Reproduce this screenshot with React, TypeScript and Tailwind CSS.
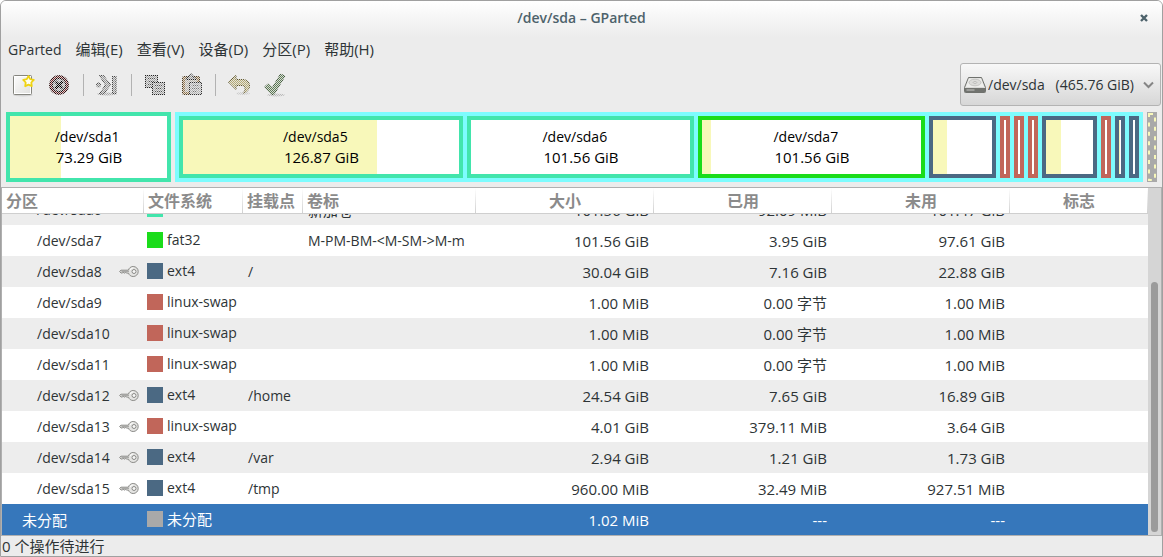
import type { ReactNode } from 'react';

type Row = {
  name: string;
  locked?: boolean;
  color: string;
  fs: string;
  mount?: string;
  label?: string;
  size: string;
  used: string;
  unused: string;
  top?: boolean;
  selected?: boolean;
};

const TEAL = 'bg-[#42e5ac]';
const GREEN = 'bg-[#1bdc1b]';
const BLUE = 'bg-[#4b6983]';
const RED = 'bg-[#c1665a]';
const GRAY = 'bg-[#a9a9a9]';

const rows: Row[] = [
  { name: '/dev/sda6', color: TEAL, fs: 'ntfs', label: '新加卷', size: '101.56 GiB', used: '92.09 MiB', unused: '101.47 GiB' },
  { name: '/dev/sda7', color: GREEN, fs: 'fat32', label: 'M-PM-BM-<M-SM->M-m', size: '101.56 GiB', used: '3.95 GiB', unused: '97.61 GiB' },
  { name: '/dev/sda8', locked: true, color: BLUE, fs: 'ext4', mount: '/', size: '30.04 GiB', used: '7.16 GiB', unused: '22.88 GiB' },
  { name: '/dev/sda9', color: RED, fs: 'linux-swap', size: '1.00 MiB', used: '0.00 字节', unused: '1.00 MiB' },
  { name: '/dev/sda10', color: RED, fs: 'linux-swap', size: '1.00 MiB', used: '0.00 字节', unused: '1.00 MiB' },
  { name: '/dev/sda11', color: RED, fs: 'linux-swap', size: '1.00 MiB', used: '0.00 字节', unused: '1.00 MiB' },
  { name: '/dev/sda12', locked: true, color: BLUE, fs: 'ext4', mount: '/home', size: '24.54 GiB', used: '7.65 GiB', unused: '16.89 GiB' },
  { name: '/dev/sda13', locked: true, color: RED, fs: 'linux-swap', size: '4.01 GiB', used: '379.11 MiB', unused: '3.64 GiB' },
  { name: '/dev/sda14', locked: true, color: BLUE, fs: 'ext4', mount: '/var', size: '2.94 GiB', used: '1.21 GiB', unused: '1.73 GiB' },
  { name: '/dev/sda15', locked: true, color: BLUE, fs: 'ext4', mount: '/tmp', size: '960.00 MiB', used: '32.49 MiB', unused: '927.51 MiB' },
  { name: '未分配', color: GRAY, fs: '未分配', size: '1.02 MiB', used: '---', unused: '---', top: true, selected: true },
];

const headers = ['分区', '文件系统', '挂载点', '卷标', '大小', '已用', '未用', '标志'];

const hasHan = (s: string) => /[\u4e00-\u9fff]/.test(s);

function Txt({ children }: { children: string }) {
  return <span className={hasHan(children) ? 'text-[15px]' : 'text-[14px]'}>{children}</span>;
}

function KeyIcon() {
  return (
    <svg width="20" height="14" viewBox="0 0 20 14" aria-hidden="true">
      <path
        d="M9.4 5.2H2L.6 6.400 2 8h1.200l.9-.8.9.8h1l.8-.7 1 .8h1.700c.6 2 2.400 3.400 4.700 3.400 2.800 0 5-2.200 5-5S17 1.500 14.200 1.500C11.800 1.500 10 3 9.400 5.200z"
        fill="#e4e4e2"
        stroke="#8a8a87"
      />
      <path d="M2.500 6.400h7.500" stroke="#a3a3a0" />
      <circle cx="15" cy="6.500" r="2" fill="#f7f7f7" stroke="#8a8a87" />
      <path d="M11.200 5a3.600 3.600 0 0 1 3-2.200" stroke="#fff" fill="none" />
    </svg>
  );
}

function ToolButton({ label, disabled, children }: { label: string; disabled?: boolean; children: ReactNode }) {
  return (
    <button type="button" aria-label={label} disabled={disabled} className="flex h-9 w-9 items-center justify-center">
      <svg width="24" height="24" viewBox="0 0 24 24" aria-hidden="true">
        {disabled ? <g mask="url(#stipple)">{children}</g> : children}
      </svg>
    </button>
  );
}

function Separator() {
  return (
    <div className="flex w-3 justify-center">
      <div className="h-[22px] w-px bg-[#b2b2b2]" />
    </div>
  );
}

function Toolbar() {
  return (
    <div className="flex items-center pl-1" role="toolbar">
      <svg width="0" height="0" className="absolute" aria-hidden="true">
        <defs>
          <pattern id="checker" width="2" height="2" patternUnits="userSpaceOnUse">
            <rect width="2" height="2" fill="#222" />
            <rect width="1" height="1" fill="#fff" />
            <rect x="1" y="1" width="1" height="1" fill="#fff" />
          </pattern>
          <mask id="stipple" maskUnits="userSpaceOnUse" x="0" y="0" width="24" height="24">
            <rect width="24" height="24" fill="url(#checker)" shapeRendering="crispEdges" />
          </mask>
          <linearGradient id="paper" x2="1" y2="1">
            <stop stopColor="#fdfdfd" />
            <stop offset="1" stopColor="#dfdfdd" />
          </linearGradient>
        </defs>
      </svg>
      <ToolButton label="新建">
        <ellipse cx="12" cy="22" rx="10" ry="1.500" fill="#d2d2d2" />
        <rect x="2.500" y="2.500" width="18" height="19" rx="1" fill="url(#paper)" stroke="#85857f" />
        <rect x="3.500" y="3.500" width="16" height="17" fill="none" stroke="#fff" />
        <path
          d="m17.500 3 1.700 3.200 3.600.6-2.500 2.700.5 3.700-3.300-1.600-3.300 1.600.5-3.700-2.500-2.700 3.600-.6z"
          fill="#fffef0"
          stroke="#efd312"
          strokeWidth="1.800"
          strokeLinejoin="round"
        />
      </ToolButton>
      <ToolButton label="删除" disabled>
        <circle cx="12" cy="12" r="10" fill="#2c0a0a" />
        <circle cx="12" cy="12" r="8.500" fill="#8c2a2e" />
        <circle cx="12" cy="12" r="6.800" fill="#a9a9a9" stroke="#1c1010" strokeWidth="1.400" />
        <path d="m8.500 8.500 7 7m0-7-7 7" stroke="#000" strokeWidth="2.800" />
      </ToolButton>
      <Separator />
      <ToolButton label="调整大小/移动" disabled>
        <ellipse cx="12" cy="21" rx="10" ry="1.500" fill="#aaa" />
        <circle cx="3.500" cy="12" r="2" fill="#999" stroke="#444" />
        <path d="M4.500 2.500h4l7 9.500-7 9h-4l6-9z" fill="#999" stroke="#444" />
        <rect x="17.500" y="3.500" width="3.500" height="17" fill="#999" stroke="#444" />
      </ToolButton>
      <Separator />
      <ToolButton label="复制" disabled>
        <rect x="2.500" y="2.500" width="12" height="12" fill="#a8a8a8" stroke="#222" />
        <path d="M5 5.500h7M5 8.500h7M5 11.500h7" stroke="#555" />
        <rect x="9.500" y="9.500" width="12" height="12" fill="#a8a8a8" stroke="#222" />
        <path d="M12 12.500h7M12 15.500h7M12 18.500h7" stroke="#555" />
      </ToolButton>
      <ToolButton label="粘贴" disabled>
        <rect x="3.500" y="3.500" width="17" height="18" rx="1" fill="#94754b" stroke="#4c3a20" />
        <rect x="6" y="6" width="12" height="13" fill="#b9b4aa" />
        <path d="M7 6.500c0-2 1.500-2.500 3-2.500 0-2 1-3 2-3s2 1 2 3c1.500 0 3 .5 3 2.500z" fill="#999" stroke="#222" />
        <rect x="10.500" y="9.500" width="12" height="12" fill="#b4b4b4" stroke="#333" />
        <path d="M13 12.500h7M13 15.500h7M13 18.500h5" stroke="#777" />
      </ToolButton>
      <Separator />
      <ToolButton label="撤消" disabled>
        <ellipse cx="16" cy="20.500" rx="7" ry="1.500" fill="#ccc" />
        <path
          d="m1.500 9 7.500-6.500v4h6.500c4 0 7 2.500 7 6.500 0 3.500-2.500 6.500-6.500 7 1.500-1.500 2.500-3 2-5-.4-1.700-1.500-2.500-3-2.500H9v4z"
          fill="#b5aa74"
          stroke="#5e5528"
        />
      </ToolButton>
      <ToolButton label="应用" disabled>
        <ellipse cx="13" cy="22" rx="9" ry="1.500" fill="#bbb" />
        <path d="m1.500 14 4-3.500 4 4L17.500 1l4.500 2L11 21.500H8.500z" fill="#5f7c56" stroke="#3a5233" strokeLinejoin="round" />
      </ToolButton>
    </div>
  );
}

function DevicePicker() {
  return (
    <label className="mr-px flex w-[201px] items-center rounded-[3px] border border-[#b3b3b3] bg-linear-to-b from-[#f8f8f8] to-[#d7d7d7] pr-[6px] pl-[3px]">
      <svg width="22" height="18" viewBox="0 0 22 18" className="shrink-0" aria-hidden="true">
        <path d="M4.500 1.500h13l4 10v4.200q0 .8-.8.8H1.300q-.8 0-.8-.8v-4.200z" fill="#d9d9d7" stroke="#6f716d" />
        <path d="M1 12h20v3.500q0 .5-.5.500h-19q-.5 0-.5-.5z" fill="#71736f" />
        <path d="M2.500 14h8" stroke="#c8c8c6" />
        <path d="M5 2.500h12l3.200 8.500H1.800z" fill="#eeeeec" />
        <ellipse cx="11" cy="6.500" rx="6" ry="3.300" fill="#dcdcda" stroke="#c4c4c2" />
        <ellipse cx="11" cy="6.500" rx="1.800" ry=".8" fill="#fff" stroke="#b5b5b3" />
      </svg>
      <select aria-label="设备" className="min-w-0 flex-1 appearance-none bg-transparent pl-[2px] text-[14px] outline-none">
        <option>{'/dev/sda\u00a0\u00a0 (465.76 GiB)'}</option>
      </select>
      <svg width="11" height="8" viewBox="0 0 11 8" className="shrink-0" aria-hidden="true">
        <path d="m1 1.500 4.500 4.500L10 1.500" fill="none" stroke="#858585" strokeWidth="2" />
      </svg>
    </label>
  );
}

function Block({ frame, size, used, name, amount }: { frame: string; size: string; used?: number; name?: string; amount?: string }) {
  return (
    <div className={`grid border-4 ${frame} ${size}`}>
      <div className="col-start-1 row-start-1 flex bg-white">
        <div className="bg-[#f8f8ba]" style={{ width: `${used ?? 0}%` }} />
      </div>
      {name && (
        <div className="z-10 col-start-1 row-start-1 flex items-center justify-center leading-[21px] text-black">
          <div>
            <div className="text-[14px]">{name}</div>
            <div className="pl-px text-[15px]">{amount}</div>
          </div>
        </div>
      )}
    </div>
  );
}

// Grow factors are the inner widths; each block's 4px frame comes on top.
function DiskMap() {
  const teal = 'border-[#42e5ac]';
  const blue = 'border-[#4b6983]';
  const red = 'border-[#c1665a]';
  const thin = 'w-[10px] shrink-0';
  return (
    <div className="mt-[6px] mb-[5px] flex h-[70px] gap-1 px-[5px]">
      <Block frame={teal} size="flex-[157_1_0px]" used={32.5} name="/dev/sda1" amount="73.29 GiB" />
      <div className="flex flex-[960_1_0px] gap-1 bg-[#7dfcfe] p-1">
        <Block frame={teal} size="flex-[276_1_0px]" used={70.3} name="/dev/sda5" amount="126.87 GiB" />
        <Block frame={teal} size="flex-[219_1_0px]" name="/dev/sda6" amount="101.56 GiB" />
        <Block frame="border-[#1bdc1b]" size="flex-[219_1_0px]" used={4.1} name="/dev/sda7" amount="101.56 GiB" />
        <Block frame={blue} size="flex-[59_1_0px]" used={23.7} />
        <Block frame={red} size={thin} />
        <Block frame={red} size={thin} />
        <Block frame={red} size={thin} />
        <Block frame={blue} size="flex-[47_1_0px]" used={31.9} />
        <Block frame={red} size={thin} />
        <Block frame={blue} size={thin} used={50} />
        <Block frame={blue} size={thin} />
      </div>
      <svg width="10" height="70" viewBox="0 0 10 70" className="shrink-0 bg-[#a9a9a9]" aria-hidden="true">
        <path d="M2 2H8V68H2Z" fill="none" stroke="#f8f8ba" strokeWidth="2" strokeDasharray="4 5.4" />
      </svg>
    </div>
  );
}

function PartitionTable() {
  return (
    <table className="min-w-0 flex-1 table-fixed border-collapse whitespace-nowrap">
      <colgroup>
        <col className="w-[142px]" />
        <col className="w-[99px]" />
        <col className="w-[60px]" />
        <col className="w-[173px]" />
        <col className="w-[178px]" />
        <col className="w-[178px]" />
        <col className="w-[178px]" />
        <col />
      </colgroup>
      <thead>
        <tr className="h-[26px] bg-white">
          {headers.map((h, i) => (
            <th
              key={h}
              className={`bg-[linear-gradient(to_bottom,#ffffff,#cfcfcf)] bg-[length:1px_100%] bg-right bg-no-repeat p-0 px-1 text-[16px] leading-[25px] font-bold text-[#8b8b8b] shadow-[inset_0_-1px_0_#cfcfcf] ${i < 4 ? 'text-left' : 'text-center'}`}
            >
              {h}
            </th>
          ))}
        </tr>
      </thead>
      <tbody>
        {rows.map((r, i) => {
          // The first row is scrolled partly under the header.
          const box = i === 0 ? 'h-[11px]' : 'h-[31px]';
          const cell = (content: ReactNode, align: string) => (
            <td className="p-0">
              <div className={`flex flex-col justify-end overflow-hidden ${box}`}>
                <div className={`flex h-[31px] shrink-0 items-center leading-[30px] ${align}`}>{content}</div>
              </div>
            </td>
          );
          const number = 'justify-end pr-[5px] text-[15px]';
          const tone = r.selected ? 'bg-[#3677bb] text-white' : i % 2 === 0 ? 'bg-[#ededed]' : 'bg-white';
          return (
            <tr key={r.name} className={tone} aria-selected={!!r.selected}>
              {cell(
                <>
                  <Txt>{r.name}</Txt>
                  {r.locked && <KeyIcon />}
                </>,
                `justify-between pr-[5px] ${r.top ? 'pl-5' : 'pl-[35px]'}`,
              )}
              {cell(
                <>
                  <span className={`h-4 w-4 shrink-0 ${r.color}`} />
                  <Txt>{r.fs}</Txt>
                </>,
                'gap-1 pb-px pl-[3px]',
              )}
              {cell(<Txt>{r.mount ?? ''}</Txt>, 'pl-[5px]')}
              {cell(<Txt>{r.label ?? ''}</Txt>, 'pl-[5px]')}
              {cell(r.size, number)}
              {cell(r.used, number)}
              {cell(r.unused, number)}
              {cell(null, '')}
            </tr>
          );
        })}
      </tbody>
    </table>
  );
}

export default function App() {
  return (
    <div className="flex min-h-screen flex-col overflow-hidden rounded-t-[6px] border border-[#a0a0a0] bg-[#ececec] font-['Open_Sans','Noto_Sans_CJK_SC',sans-serif] text-[#2e3436]">
      <header className="grid h-9 grid-cols-[1fr_auto_1fr] items-center bg-linear-to-b from-white to-[#ececec] pb-[2px]">
        <h1 className="col-start-2 text-[14px] leading-5 font-semibold text-[#4d626b]">/dev/sda – GParted</h1>
        <button type="button" aria-label="关闭" className="mr-3 flex h-3 w-3 items-center justify-center justify-self-end">
          <svg width="8" height="8" viewBox="0 0 8 8" aria-hidden="true">
            <path d="m1 1 6 6m0-6-6 6" stroke="#4d626b" strokeWidth="2.400" />
          </svg>
        </button>
      </header>
      <nav className="flex h-[26px] items-center gap-[14px] pb-px pl-[7px] text-[15px]">
        <button type="button" className="text-[14px]">GParted</button>
        <button type="button">编辑(E)</button>
        <button type="button">查看(V)</button>
        <button type="button">设备(D)</button>
        <button type="button">分区(P)</button>
        <button type="button">帮助(H)</button>
      </nav>
      <div className="flex h-[43px] justify-between">
        <Toolbar />
        <DevicePicker />
      </div>
      <DiskMap />
      <main className="flex border-x border-t border-[#b0b0b0]">
        <PartitionTable />
        <div className="flex w-[13px] shrink-0 flex-col justify-end bg-[#d5d5d5] px-[3px] pb-[3px]">
          <div className="h-[250px] rounded-full bg-[#9b9b9b]" />
        </div>
      </main>
      <footer className="flex h-[21px] items-center border-t border-[#b0b0b0] pl-px text-[15px] leading-5">0 个操作待进行</footer>
    </div>
  );
}
